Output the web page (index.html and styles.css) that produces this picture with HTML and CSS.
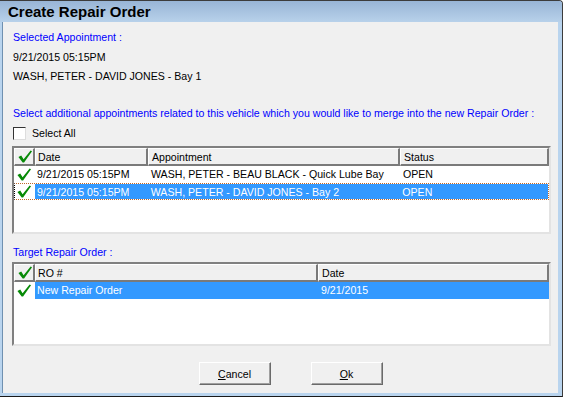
FILE: index.html
```html
<!DOCTYPE html>
<html lang="en">
<head>
  <meta charset="UTF-8" />
  <title>Create Repair Order</title>
  <link rel="stylesheet" href="styles.css">
</head>
<body>
  <div class="window">
    <div class="titlebar">Create Repair Order</div>
    <div class="content">
      <div class="label blue first">Selected Appointment :</div>
      <div class="label line2">9/21/2015 05:15PM</div>
      <div class="label line3">WASH, PETER - DAVID JONES - Bay 1</div>
      <div class="label blue line4">Select additional appointments related to this vehicle which you would like to merge into the new Repair Order :</div>
      <div class="select-all">
        <span class="checkbox"></span>
        <span>Select All</span>
      </div>

      <div class="grid grid-appts">
        <div class="row head">
          <div class="cell chk"><svg class="tick" viewBox="0 0 16 16"><path d="M1 8.5 L4 7 L6.5 11 L14 1.5 L15.5 2.5 L7 14.5 L5.5 14.5 Z"/></svg></div>
          <div class="cell c-date">Date</div>
          <div class="cell c-appt">Appointment</div>
          <div class="cell c-status">Status</div>
        </div>
        <div class="row">
          <div class="cell chk"><svg class="tick" viewBox="0 0 16 16"><path d="M1 8.5 L4 7 L6.5 11 L14 1.5 L15.5 2.5 L7 14.5 L5.5 14.5 Z"/></svg></div>
          <div class="cell c-date">9/21/2015 05:15PM</div>
          <div class="cell c-appt">WASH, PETER - BEAU BLACK - Quick Lube Bay</div>
          <div class="cell c-status">OPEN</div>
        </div>
        <div class="row selected focused">
          <div class="cell chk"><svg class="tick" viewBox="0 0 16 16"><path d="M1 8.5 L4 7 L6.5 11 L14 1.5 L15.5 2.5 L7 14.5 L5.5 14.5 Z"/></svg></div>
          <div class="cell c-date">9/21/2015 05:15PM</div>
          <div class="cell c-appt">WASH, PETER - DAVID JONES - Bay 2</div>
          <div class="cell c-status">OPEN</div>
        </div>
      </div>

      <div class="label blue target">Target Repair Order :</div>

      <div class="grid grid-ro">
        <div class="row head">
          <div class="cell chk"><svg class="tick" viewBox="0 0 16 16"><path d="M1 8.5 L4 7 L6.5 11 L14 1.5 L15.5 2.5 L7 14.5 L5.5 14.5 Z"/></svg></div>
          <div class="cell c-ro">RO #</div>
          <div class="cell c-rodate">Date</div>
        </div>
        <div class="row selected">
          <div class="cell chk"><svg class="tick" viewBox="0 0 16 16"><path d="M1 8.5 L4 7 L6.5 11 L14 1.5 L15.5 2.5 L7 14.5 L5.5 14.5 Z"/></svg></div>
          <div class="cell c-ro">New Repair Order</div>
          <div class="cell c-rodate">9/21/2015</div>
        </div>
      </div>

      <div class="buttons">
        <button class="btn"><u>C</u>ancel</button>
        <button class="btn"><u>O</u>k</button>
      </div>
    </div>
  </div>
</body>
</html>
```

FILE: styles.css
```css
body {
  margin: 0;
  font-family: 'Liberation Sans', Arial, sans-serif;
  font-size: 10.6px;
  color: #000;
  background: #fff;
}
.window {
  width: 563px;
  height: 397px;
  box-sizing: border-box;
  display: flex;
  flex-direction: column;
  background: #b9d4ee;
  border-top: 1px solid #3c3c3c;
  border-right: 1px solid #3c3c3c;
  border-bottom: 1px solid #1a1a1a;
  border-top-right-radius: 4px;
  overflow: hidden;
}
.titlebar {
  height: 21px;
  line-height: 21px;
  padding-left: 8px;
  font-size: 15px;
  font-weight: bold;
  background: linear-gradient(#98b5d6, #b8d1ea);
}
.content {
  flex: 1;
  background: #f0f0f0;
  margin: 0 4px 3px 2px;
  padding-left: 10px;
  border-left: 1px solid #6f90b0;
}
.label {
  height: 14px;
  line-height: 14px;
  white-space: nowrap;
}
.blue { color: #0000ff; }
.first { margin-top: 8px; }
.line2 { margin-top: 6px; }
.line3 { margin-top: 5px; }
.line4 { margin-top: 23px; }
.select-all {
  display: flex;
  align-items: center;
  gap: 6px;
  height: 14px;
  margin-top: 6px;
}
.checkbox {
  width: 11px;
  height: 11px;
  background: #fff;
  border: 1px solid #333;
  border-right-color: #ddd;
  border-bottom-color: #ddd;
}
.grid {
  width: 539px;
  box-sizing: border-box;
  background: #fff;
  border: 2px solid;
  border-color: #808080 #e3e3e3 #e3e3e3 #808080;
  margin-left: -1px;
}
.grid-appts {
  height: 88px;
  margin-top: 6px;
}
.grid-ro {
  height: 84px;
  margin-top: 3px;
}
.target { margin-top: 11px; }
.row {
  display: flex;
  height: 17px;
  line-height: 17px;
}
.row.head {
  height: 18px;
  line-height: 16px;
}
.cell {
  box-sizing: border-box;
  padding-left: 2px;
  white-space: nowrap;
  overflow: hidden;
}
.head .cell {
  background: #f0f0f0;
  border-top: 1px solid #fff;
  border-left: 1px solid #fff;
  border-right: 2px solid #7a7a7a;
  border-bottom: 2px solid #7a7a7a;
}
.chk {
  width: 21px;
  padding-left: 2px;
  display: flex;
  align-items: center;
}
.tick {
  width: 16px;
  height: 15px;
  fill: #078a07;
}
.c-date { width: 113px; }
.c-appt { width: 252px; padding-left: 3px; }
.c-status { width: 149px; padding-left: 3px; }
.c-ro { width: 283px; }
.c-rodate { width: 231px; padding-left: 3px; }
.selected .cell:not(.chk) {
  background: #3399ff;
  color: #fff;
}
.focused {
  width: 535px;
  box-sizing: border-box;
  border: 1px dotted #c0692a;
  border-left-color: #000;
}
.focused .chk { width: 20px; padding-left: 1px; }
.buttons {
  display: flex;
  justify-content: center;
  gap: 40px;
  margin-top: 16px;
  padding-left: 10px;
}
.btn {
  width: 72px;
  height: 23px;
  font-family: 'Liberation Sans', Arial, sans-serif;
  font-size: 10.6px;
  background: #f0f0f0;
  border: 1px solid;
  border-color: #fff #6a6a6a #6a6a6a #fff;
  box-shadow: inset -1px -1px 0 #a0a0a0;
  padding: 0;
}
```
